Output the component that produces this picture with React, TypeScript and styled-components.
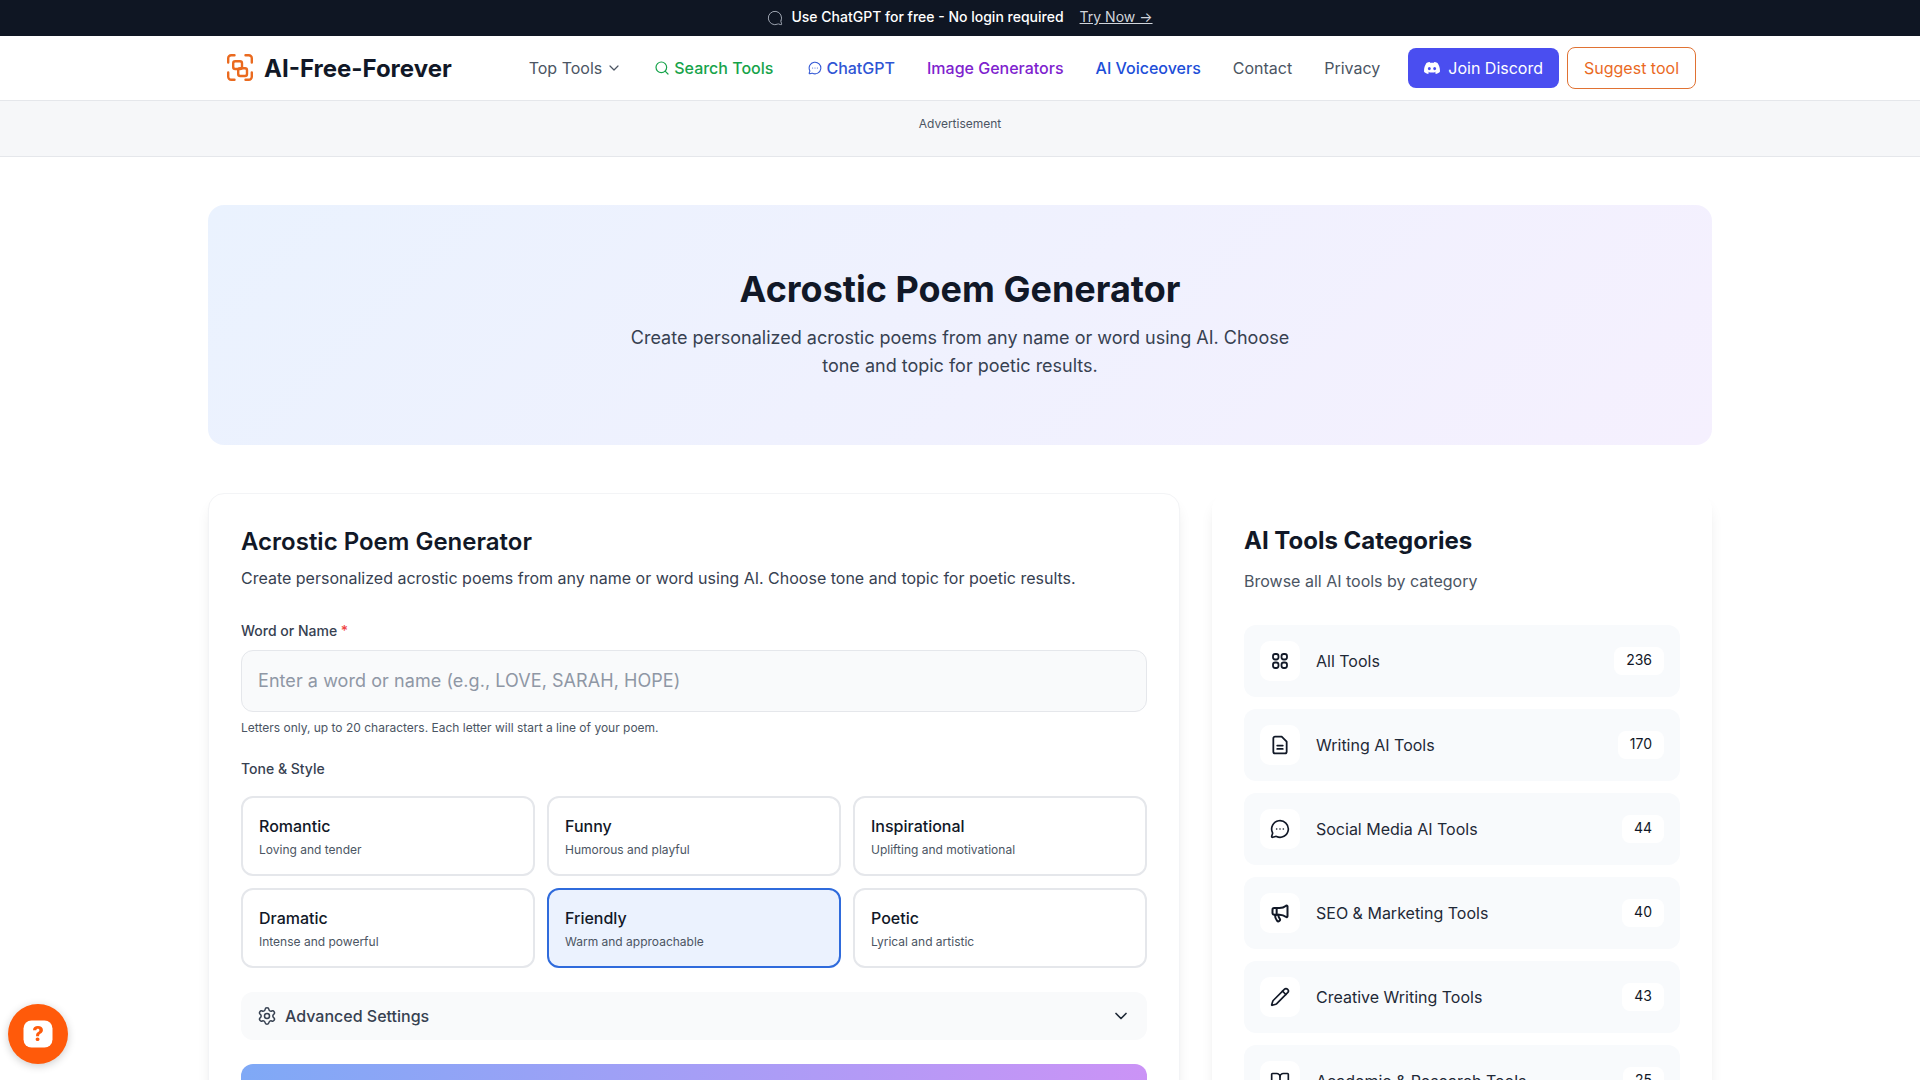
import React from "react";
import styled, { createGlobalStyle } from "styled-components";
import { ChevronDown, Search, MessageCircle, MessageCircleMore, Settings, Pencil, BookOpen, Megaphone } from "lucide-react";

const Global = createGlobalStyle`
  * { box-sizing: border-box; }
  html, body { margin: 0; height: 1080px; overflow: hidden; background: #fff; }
  body { font-family: Inter, "Liberation Sans", sans-serif; color: #111827; }
  input::placeholder { color: #8f97a5; opacity: 1; }
`;

const Promo = styled.div`
  height: 36px; padding-bottom: 3px; background: #0f1623; color: #fff; display: flex; align-items: center; justify-content: center;
  font-size: 14px; font-weight: 500;
  svg { margin-right: 8px; margin-top: 3px; color: #9ca3af; transform: scaleX(-1); }
  a { margin-left: 16px; color: #d1d5db; text-decoration: underline; font-weight: 400; font-size: 14px; }
`;
const Header = styled.header`
  height: 65px; border-bottom: 1px solid #e5e7eb; background: #fff;
  display: flex; justify-content: center;
`;
const HeaderInner = styled.div`
  width: 1472px; display: flex; align-items: center;
`;
const Brand = styled.div`
  display: flex; align-items: center; gap: 8px; font-size: 24px; font-weight: 700; color: #111827; margin-left: 2px;
`;
const Nav = styled.nav`display: flex; align-items: center; gap: 32px; margin-left: auto; margin-right: 28px;`;
const NavLink = styled.a<{ $c?: string; $w?: number; $after?: number }>`
  display: flex; align-items: center; gap: 4px; font-size: 16px; line-height: 24px;
  font-weight: ${p => p.$w ?? 400}; color: ${p => p.$c ?? "#4b5563"};
  margin-right: ${p => p.$after ?? 0}px;
`;
const Actions = styled.div`display: flex; align-items: center; gap: 8px;`;
const Discord = styled.a`
  height: 40px; padding: 0 16px; background: #4a4ef0; color: #fff; border-radius: 8px;
  display: flex; align-items: center; gap: 8px; font-size: 16px;
`;
const Suggest = styled.a`
  height: 42px; padding: 0 16px; border: 1px solid #e07233; color: #ea6a1f; border-radius: 8px;
  display: flex; align-items: center; font-size: 16px;
`;
const AdStrip = styled.div`
  height: 56px; background: #f6f7f9; border-bottom: 1px solid #e5e7eb; text-align: center;
  font-size: 12px; line-height: 16px; color: #4b5563; padding-top: 15px;
`;
const Main = styled.main`width: 1504px; margin: 48px auto 0;`;
const Hero = styled.section`
  height: 240px; border-radius: 16px; background: linear-gradient(135deg, #eaf2fe, #f5f0fe);
  text-align: center; padding-top: 64px; margin-bottom: 48px;
  h1 { margin: 0 0 15px; font-size: 36px; line-height: 40px; font-weight: 700; color: #111827; }
  p { margin: 0 auto; width: 672px; font-size: 18px; line-height: 28px; color: #374151; }
`;
const Columns = styled.div`display: grid; grid-template-columns: 972px 500px; gap: 32px; align-items: start;`;
const cardShadow = "0 10px 15px -3px rgba(0,0,0,.09), 0 4px 6px -4px rgba(0,0,0,.09)";
const Card = styled.section`
  background: #fff; border: 1px solid #f3f4f6; border-radius: 16px; padding: 32px;
  box-shadow: ${cardShadow};
`;
const SideCard = styled.aside`
  background: #fff; border-radius: 16px; padding: 32px;
  box-shadow: ${cardShadow};
`;
const CardTitle = styled.h2`margin: 0 0 8px; font-size: 24px; line-height: 32px; font-weight: 600; color: #111827;`;
const CardLead = styled.p`margin: 0 0 31px; font-size: 16px; line-height: 24px; color: #374151;`;
const Label = styled.label<{ $gap?: number }>`
  display: block; font-size: 14px; line-height: 20px; font-weight: 500; color: #374151; margin-bottom: ${p => p.$gap ?? 8}px;
  b { color: #ef4444; font-weight: 500; }
`;
const NameInput = styled.input`
  display: block; width: 100%; height: 62px; border: 1px solid #e5e7eb; border-radius: 12px; background: #f9fafb;
  padding: 0 16px 2px; font: 400 18px Inter, sans-serif; letter-spacing: .06px; margin-top: 9px; margin-bottom: 8px; outline: none;
`;
const Hint = styled.p`margin: 0 0 23px; font-size: 12px; line-height: 16px; color: #4b5563;`;
const ToneGrid = styled.div`display: grid; grid-template-columns: repeat(3, 1fr); gap: 12px; margin-bottom: 24px;`;
const Tone = styled.div<{ $active?: boolean }>`
  height: 80px; border-radius: 12px; padding: 16px 16px 0;
  border: 2px solid ${p => (p.$active ? "#2f6bdc" : "#e5e7eb")};
  background: ${p => (p.$active ? "#ebf2fe" : "#fff")};
  strong { display: block; font-size: 16px; line-height: 24px; font-weight: 500; color: #111827; }
  span { display: block; font-size: 12px; line-height: 16px; color: #4b5563; margin-top: 4px; }
`;
const Advanced = styled.div`
  height: 48px; border-radius: 12px; background: #f9fafb; padding: 0 16px; margin-bottom: 24px;
  display: flex; align-items: center; gap: 8px; font-size: 16px; font-weight: 500; color: #374151;
  svg:last-child { margin-left: auto; color: #1f2937; }
`;
const Generate = styled.button`
  display: block; width: 100%; height: 56px; border: 0; border-radius: 12px; color: #fff;
  font: 600 18px Inter, sans-serif; background: linear-gradient(90deg, #7fa9f6, #cb93f6);
`;
const SideTitle = styled.h2`margin: 0 0 12px; font-size: 24px; line-height: 32px; font-weight: 700; color: #111827;`;
const SideLead = styled.p`margin: 0 0 32px; font-size: 16px; line-height: 24px; color: #4b5563;`;
const CatList = styled.div`display: flex; flex-direction: column; gap: 12px;`;
const Cat = styled.div`
  height: 72px; border-radius: 12px; background: #f8fafc; padding: 0 16px;
  display: flex; align-items: center; gap: 16px; font-size: 16px; color: #1f2937;
`;
const CatIcon = styled.span`
  width: 40px; height: 40px; border-radius: 10px; background: #fff; color: #111827;
  display: flex; align-items: center; justify-content: center; flex: none;
`;
const Count = styled.span`
  margin-left: auto; height: 28px; padding: 0 12px; border-radius: 8px; background: #fff;
  font-size: 14px; line-height: 25px; color: #111827;
`;
const HelpFab = styled.button`
  position: fixed; left: 8px; bottom: 16px; width: 60px; height: 60px; border: 0; border-radius: 50%;
  background: #ff5a0a; box-shadow: 0 2px 8px rgba(0,0,0,.2); padding: 0;
  display: flex; align-items: center; justify-content: center;
`;

const Logo = () => (
  <svg width="30" height="30" viewBox="0 0 30 30" fill="none" stroke="#ea6a1f" strokeWidth="2.4" strokeLinecap="round" strokeLinejoin="round">
    <path d="M2.200 9.500V5.200A3 3 0 0 1 5.200 2.200H8.500M19.500 2.200H22.800A3 3 0 0 1 25.800 5.200V9.500M25.800 19.500V23.800A3 3 0 0 1 22.800 26.800H19.500M8.500 26.800H5.200A3 3 0 0 1 2.200 23.800V19.500" />
    <rect x="7.200" y="8.200" width="8.800" height="7.800" rx="2" />
    <rect x="12.200" y="15.200" width="8.800" height="7.800" rx="2" />
  </svg>
);
const DiscordIcon = () => (
  <svg width="16" height="16" viewBox="0 0 24 24" fill="#fff">
    <path d="M20.300 4.400A19.800 19.800 0 0 0 15.400 3l-.6 1.300a18 18 0 0 0-5.600 0L8.600 3a19.800 19.800 0 0 0-4.900 1.400C.6 9 -.3 13.500.2 17.900a20 20 0 0 0 6 3.100l1.300-2.100-2-1 .5-.4a14 14 0 0 0 12 0l.5.400-2 1 1.300 2.100a20 20 0 0 0 6-3.100c.6-5.100-.9-9.500-3.500-13.500ZM8 15.300c-1.200 0-2.200-1.100-2.200-2.400S6.800 10.500 8 10.500s2.200 1.100 2.200 2.400-1 2.400-2.200 2.400Zm8 0c-1.200 0-2.200-1.100-2.200-2.400s1-2.400 2.200-2.400 2.200 1.100 2.200 2.400-1 2.400-2.200 2.400Z" />
  </svg>
);
const GridIcon = () => (
  <svg width="18" height="18" viewBox="0 0 18 18" fill="none" stroke="#111827" strokeWidth="1.800">
    <rect x="2" y="2" width="5.500" height="5.500" rx="2.200" />
    <rect x="10.500" y="2" width="5.500" height="5.500" rx="2.200" />
    <rect x="2" y="10.500" width="5.500" height="5.500" rx="2.200" />
    <rect x="10.500" y="10.500" width="5.500" height="5.500" rx="2.200" />
  </svg>
);
const DocIcon = () => (
  <svg width="20" height="20" viewBox="0 0 18 18" fill="none" stroke="#111827" strokeWidth="1.600" strokeLinecap="round" strokeLinejoin="round">
    <path d="M10.500 1.500H4.500A1.500 1.500 0 0 0 3 3v12a1.500 1.500 0 0 0 1.500 1.500h9A1.500 1.500 0 0 0 15 15V6z" />
    <path d="M6.500 9.500h5M6.500 12.500h5" />
  </svg>
);

const tones = [
  ["Romantic", "Loving and tender"], ["Funny", "Humorous and playful"], ["Inspirational", "Uplifting and motivational"],
  ["Dramatic", "Intense and powerful"], ["Friendly", "Warm and approachable"], ["Poetic", "Lyrical and artistic"],
];
const cats: [React.ReactNode, string, number][] = [
  [<GridIcon />, "All Tools", 236],
  [<DocIcon />, "Writing AI Tools", 170],
  [<MessageCircleMore size={20} strokeWidth={2} />, "Social Media AI Tools", 44],
  [<Megaphone size={20} strokeWidth={2.400} />, "SEO & Marketing Tools", 40],
  [<Pencil size={20} strokeWidth={2} />, "Creative Writing Tools", 43],
  [<BookOpen size={20} strokeWidth={2} />, "Academic & Research Tools", 25],
];

export default function App() {
  return (
    <>
      <Global />
      <Promo>
        <MessageCircle size={16} strokeWidth={1.500} />
        Use ChatGPT for free - No login required
        <a>Try Now →</a>
      </Promo>
      <Header>
        <HeaderInner>
          <Brand><Logo />AI-Free-Forever</Brand>
          <Nav>
            <NavLink>Top Tools <ChevronDown size={16} strokeWidth={1.800} /></NavLink>
            <NavLink $c="#16a34a" $w={500} $after={3}><Search size={16} strokeWidth={1.800} /> Search Tools</NavLink>
            <NavLink $c="#2f55d4" $w={500}><MessageCircleMore size={14} strokeWidth={1.800} /> ChatGPT</NavLink>
            <NavLink $c="#7e22ce" $w={500}>Image Generators</NavLink>
            <NavLink $c="#1d4ed8" $w={500}>AI Voiceovers</NavLink>
            <NavLink>Contact</NavLink>
            <NavLink>Privacy</NavLink>
          </Nav>
          <Actions>
            <Discord><DiscordIcon />Join Discord</Discord>
            <Suggest>Suggest tool</Suggest>
          </Actions>
        </HeaderInner>
      </Header>
      <AdStrip>Advertisement</AdStrip>
      <Main>
        <Hero>
          <h1>Acrostic Poem Generator</h1>
          <p>Create personalized acrostic poems from any name or word using AI. Choose tone and topic for poetic results.</p>
        </Hero>
        <Columns>
          <Card>
            <CardTitle>Acrostic Poem Generator</CardTitle>
            <CardLead>Create personalized acrostic poems from any name or word using AI. Choose tone and topic for poetic results.</CardLead>
            <Label $gap={0}>Word or Name <b>*</b></Label>
            <NameInput placeholder="Enter a word or name (e.g., LOVE, SARAH, HOPE)" />
            <Hint>Letters only, up to 20 characters. Each letter will start a line of your poem.</Hint>
            <Label $gap={17}>Tone &amp; Style</Label>
            <ToneGrid>
              {tones.map(([t, d]) => (
                <Tone key={t} $active={t === "Friendly"}><strong>{t}</strong><span>{d}</span></Tone>
              ))}
            </ToneGrid>
            <Advanced><Settings size={20} strokeWidth={1.800} /> Advanced Settings <ChevronDown size={20} strokeWidth={2} /></Advanced>
            <Generate>Generate Acrostic Poem</Generate>
          </Card>
          <SideCard>
            <SideTitle>AI Tools Categories</SideTitle>
            <SideLead>Browse all AI tools by category</SideLead>
            <CatList>
              {cats.map(([icon, name, n]) => (
                <Cat key={name}>
                  <CatIcon>{icon}</CatIcon>{name}<Count>{n}</Count>
                </Cat>
              ))}
            </CatList>
          </SideCard>
        </Columns>
      </Main>
      <HelpFab aria-label="Help">
        <svg width="30" height="30" viewBox="0 0 30 30">
          <rect x="0.500" y="1.500" width="29" height="27" rx="8" fill="#fff" />
          <text x="15" y="22" textAnchor="middle" fontFamily="Inter, sans-serif" fontWeight="800" fontSize="20" fill="#ff5a0a">?</text>
        </svg>
      </HelpFab>
    </>
  );
}
